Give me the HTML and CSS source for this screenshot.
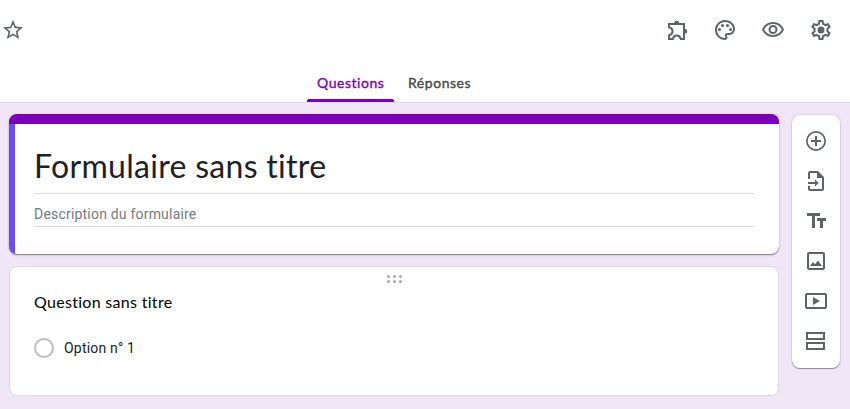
FILE: index.html
```html
<!DOCTYPE html>
<html lang="fr">
<head>
<meta charset="utf-8">
<title>Formulaire sans titre</title>
<link rel="stylesheet" href="styles.css">
</head>
<body>
<header class="header">
  <div class="topbar">
    <svg class="icon" viewBox="0 0 24 24"><path d="M22 9.24l-7.19-.62L12 2 9.19 8.63 2 9.24l5.46 4.73L5.82 21 12 17.27 18.18 21l-1.63-7.03L22 9.24zM12 15.4l-3.76 2.27 1-4.28-3.32-2.88 4.38-.38L12 6.1l1.71 4.04 4.38.38-3.32 2.88 1 4.28L12 15.4z"/></svg>
    <div class="actions">
      <svg class="icon" viewBox="0 0 24 24"><path class="line" d="M4 6H19V21H15.8C15.3 18.7 13.8 17.4 11.8 17.4S8.300 18.700 7.800 21H4V17.300C6.300 16.800 7.600 15.300 7.600 13.300S6.300 9.800 4 9.300Z"/><path d="M9.200 5.500a2.500 2.700 0 0 1 5 0zM19.500 10.700a2.700 2.500 0 0 1 0 5z"/></svg>
      <svg class="icon" viewBox="0 0 24 24"><path d="M12 22C6.490 22 2 17.510 2 12S6.490 2 12 2s10 4.040 10 9c0 3.310-2.690 6-6 6h-1.770c-.28 0-.5.22-.5.5 0 .12.05.23.13.33.41.47.64 1.060.64 1.670 0 1.380-1.120 2.500-2.500 2.500zm0-18c-4.410 0-8 3.590-8 8s3.590 8 8 8c.28 0 .5-.22.5-.5 0-.16-.08-.28-.14-.35-.41-.46-.63-1.050-.63-1.650 0-1.380 1.120-2.500 2.500-2.500H16c2.210 0 4-1.790 4-4 0-3.860-3.590-7-8-7z"/><circle cx="6.500" cy="11.500" r="1.500"/><circle cx="9.500" cy="7.500" r="1.500"/><circle cx="14.500" cy="7.500" r="1.500"/><circle cx="17.500" cy="11.500" r="1.500"/></svg>
      <svg class="icon" viewBox="0 0 24 24"><path d="M12 6c3.790 0 7.170 2.130 8.820 5.500C19.170 14.870 15.790 17 12 17s-7.170-2.130-8.820-5.500C4.830 8.130 8.210 6 12 6m0-2C7 4 2.730 7.110 1 11.500 2.730 15.890 7 19 12 19s9.270-3.110 11-7.500C21.270 7.110 17 4 12 4z"/><circle class="line" cx="12" cy="11.500" r="3.500"/></svg>
      <svg class="icon" viewBox="0 0 24 24"><path d="M19.430 12.980c.04-.32.07-.64.07-.98s-.03-.66-.07-.98l2.110-1.650c.19-.15.24-.42.12-.64l-2-3.460c-.09-.16-.26-.25-.44-.25-.06 0-.12.01-.17.03l-2.490 1c-.52-.4-1.080-.73-1.690-.98l-.38-2.650C14.460 2.180 14.250 2 14 2h-4c-.25 0-.46.18-.49.42l-.38 2.650c-.61.25-1.170.59-1.690.98l-2.490-1c-.06-.02-.12-.03-.18-.03-.17 0-.34.09-.43.25l-2 3.460c-.13.22-.07.49.12.64l2.110 1.650c-.04.32-.07.65-.07.98s.03.66.07.98l-2.110 1.650c-.19.15-.24.42-.12.64l2 3.460c.09.16.26.25.44.25.06 0 .12-.01.17-.03l2.490-1c.52.4 1.080.73 1.690.98l.38 2.650c.03.24.24.42.49.42h4c.25 0 .46-.18.49-.42l.38-2.650c.61-.25 1.170-.59 1.690-.98l2.490 1c.06.02.12.03.18.03.17 0 .34-.09.43-.25l2-3.460c.12-.22.07-.49-.12-.64l-2.110-1.650zm-1.980-1.710c.04.31.05.52.05.73 0 .21-.02.43-.05.73l-.14 1.130.89.7 1.080.84-.7 1.210-1.270-.51-1.040-.42-.9.68c-.43.32-.84.56-1.250.73l-1.060.43-.16 1.130-.2 1.350h-1.400l-.19-1.350-.16-1.130-1.060-.43c-.43-.18-.83-.41-1.230-.71l-.91-.7-1.060.43-1.270.51-.7-1.210 1.080-.84.89-.7-.14-1.130c-.03-.31-.05-.54-.05-.74s.02-.43.05-.73l.14-1.130-.89-.7-1.080-.84.7-1.210 1.270.51 1.040.42.9-.68c.43-.32.84-.56 1.250-.73l1.060-.43.16-1.130.2-1.350h1.390l.19 1.350.16 1.130 1.060.43c.43.18.83.41 1.230.71l.91.7 1.060-.43 1.270-.51.7 1.210-1.070.85-.89.7.14 1.130z"/><circle cx="12" cy="12" r="3.500"/></svg>
    </div>
  </div>
  <nav class="tabs">
    <div class="tab tab-active">Questions</div>
    <div class="tab tab-answers">Réponses</div>
  </nav>
</header>
<main class="content">
  <div class="cards">
    <section class="card title-card">
      <div class="title-body">
        <div class="field title-field"><h1 class="title">Formulaire sans titre</h1></div>
        <div class="field desc-field"><span class="desc">Description du formulaire</span></div>
      </div>
    </section>
    <section class="card question-card">
      <svg class="grip" viewBox="0 0 16 8"><circle cx="2.500" cy="1.500" r="1.500"/><circle cx="8.500" cy="1.500" r="1.500"/><circle cx="14.500" cy="1.500" r="1.500"/><circle cx="2.500" cy="6.500" r="1.500"/><circle cx="8.500" cy="6.500" r="1.500"/><circle cx="14.500" cy="6.500" r="1.500"/></svg>
      <h2 class="question">Question sans titre</h2>
      <div class="option"><span class="radio"></span><span class="option-label">Option n° 1</span></div>
    </section>
  </div>
  <aside class="toolbar">
    <svg class="icon" viewBox="0 0 24 24"><circle class="thin" cx="12" cy="12" r="9.150"/><path d="M11 7h2v4h4v2h-4v4h-2v-4H7v-2h4z"/></svg>
    <svg class="icon" viewBox="0 0 24 24"><path class="line" d="M5 10V4a1 1 0 0 1 1-1H13.500L19 8.500V20a1 1 0 0 1-1 1H6a1 1 0 0 1-1-1V17"/><path d="M13 2.500V9h6.500zM4 13h7v-2.500l3.800 3.500-3.800 3.500V15H4z"/></svg>
    <svg class="icon" viewBox="0 0 24 24"><path d="M3 4h13v3h-5v12H8V7H3zM13 9h9v3h-3v7h-3v-7h-3z"/></svg>
    <svg class="icon" viewBox="0 0 24 24"><rect class="line" x="4" y="4" width="16" height="16" rx="1"/><path d="M6 17l3-4 2 2.300 3-3.800 4 5.500z"/></svg>
    <svg class="icon" viewBox="0 0 24 24"><rect class="line" x="2" y="5" width="20" height="14" rx="1"/><path d="M9 8v8l7-4z"/></svg>
    <svg class="icon" viewBox="0 0 24 24"><path class="line" d="M3 4h17v6H3zM3 14h17v6H3z"/></svg>
  </aside>
</main>
</body>
</html>
```
FILE: styles.css
```css
* { box-sizing: border-box; }
body {
  margin: 0;
  height: 409px;
  overflow: hidden;
  background: #f0e6f7;
  color: #202124;
  font-family: Roboto, sans-serif;
}
h1, h2 { margin: 0; font-weight: 400; }
.icon { display: block; width: 24px; height: 24px; fill: #5f6368; flex: none; }
.line { fill: none; stroke: #5f6368; stroke-width: 2; }
.thin { fill: none; stroke: #5f6368; stroke-width: 1.700; }

.header { height: 103px; background: #fff; border-bottom: 1px solid #dadce0; }
.topbar {
  height: 66px;
  padding: 18px 17px 0 1px;
  display: flex;
  justify-content: space-between;
}
.actions { display: flex; gap: 24px; }
.tabs { display: flex; height: 36px; padding-left: 307px; gap: 4px; }
.tab {
  padding-left: 10px;
  width: 87px;
  line-height: 34px;
  font-family: Lato, sans-serif;
  font-size: 14px;
  font-weight: 400;
  -webkit-text-stroke: .35px currentColor;
  letter-spacing: .54px;
  color: #444746;
  white-space: nowrap;
}
.tab-active {
  color: #7b00b8;
  background: radial-gradient(circle at 3px 3px, #7b00b8 3px, transparent 3.500px) left bottom / 3px 3px no-repeat,
    radial-gradient(circle at 0 3px, #7b00b8 3px, transparent 3.500px) right bottom / 3px 3px no-repeat,
    linear-gradient(#7b00b8, #7b00b8) center bottom / 81px 3px no-repeat;
}

.content { display: flex; align-items: flex-start; padding: 11px 9px 0; gap: 13px; }
.cards { width: 770px; display: flex; flex-direction: column; gap: 12px; }
.card { background: #fff; border-radius: 8px; }
.title-card {
  height: 140px;
  overflow: hidden;
  background: linear-gradient(#7b00b8, #7b00b8) top / 100% 10px no-repeat,
    linear-gradient(#674dff, #674dff) left / 6px 100% no-repeat, #fff;
  box-shadow: 0 1px 1px rgba(60, 50, 80, .5), 0 1px 3px rgba(60, 50, 80, .2);
}
.title-body { padding: 27px 25px 0; }
.field { border-bottom: 1px solid #dadce0; white-space: nowrap; }
.title-field { height: 53px; }
.title { font-family: Lato, sans-serif; font-size: 32px; line-height: 50px; letter-spacing: .3px; }
.desc-field { height: 33px; padding-top: 10px; }
.desc { display: block; font-size: 14px; line-height: 21px; letter-spacing: .2px; color: #757a80; }
.question-card { height: 130px; padding: 8px 24px; border: 1px solid #dadce0; }
.grip { display: block; width: 16px; height: 8px; margin: 0 auto; fill: #aaa; }
.question { margin-top: 7px; font-family: Lato, sans-serif; font-size: 16px; line-height: 24px; letter-spacing: .3px; color: #000; }
.option { display: flex; align-items: center; gap: 10px; margin-top: 24px; height: 20px; }
.radio { width: 20px; height: 20px; border: 2px solid #bdbdbd; border-radius: 50%; }
.option-label { font-size: 14px; letter-spacing: .2px; }
.toolbar {
  width: 48px;
  height: 253px;
  margin-top: 1px;
  padding: 14px 12px;
  display: flex;
  flex-direction: column;
  gap: 16px;
  background: #fff;
  border-radius: 8px;
  box-shadow: 0 1px 1px rgba(60, 50, 80, .5), 0 0 2px rgba(60, 50, 80, .25);
}
```
